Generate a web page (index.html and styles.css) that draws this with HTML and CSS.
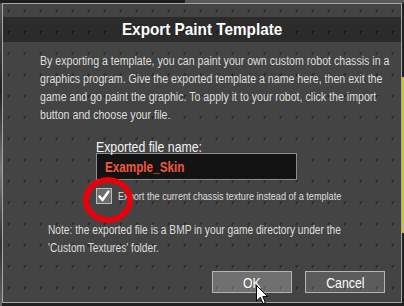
FILE: index.html
```html
<!DOCTYPE html>
<html lang="en">
<head>
  <meta charset="UTF-8">
  <meta name="viewport" content="width=device-width, initial-scale=1.0">
  <title>Export Paint Template</title>
  <link rel="stylesheet" href="styles.css">
</head>
<body>
  <div class="dialog">
    <h1 class="title"><span>Export Paint Template</span></h1>
    <p class="intro">By exporting a template, you can paint your own custom robot chassis in a<br>graphics program. Give the exported template a name here, then exit the<br>game and go paint the graphic. To apply it to your robot, click the import<br>button and choose your file.</p>

    <div class="field">
      <label><span>Exported file name:</span></label>
      <div class="input"><span>Example_Skin</span></div>
    </div>

    <div class="check">
      <span class="box">
        <svg width="14" height="14" viewBox="0 0 14 14"><path d="M2.5 7.5 L5.5 11 L11.5 2.5" fill="none" stroke="#fff" stroke-width="2.6" stroke-linecap="round" stroke-linejoin="round"/></svg>
      </span>
      <span class="check-label">Export the current chassis texture instead of a template</span>
    </div>

    <p class="note">Note: the exported file is a BMP in your game directory under the<br>'Custom Textures' folder.</p>

    <div class="actions">
      <button class="btn hover"><span>OK</span></button>
      <button class="btn"><span>Cancel</span></button>
    </div>

    <span class="marker"></span>
    <svg class="cursor" width="13" height="20" viewBox="0 0 13 20"><path d="M0.5 0.5 L0.5 16 L4.3 12.4 L7 18.6 L9.4 17.6 L6.8 11.6 L11.6 11.6 Z" fill="#fff" stroke="#000" stroke-width="1"/></svg>
  </div>
</body>
</html>
```

FILE: styles.css
```css
:root {
  --panel: #444444;
  --dot: #2b2b2b;
  --text: #dedede;
  --edge: #a8a8a8;
  --accent: #f2573d;
}

html, body {
  margin: 0;
  height: 100%;
}

body {
  background:
    linear-gradient(90deg, transparent 402px, #c9c23a 402px) 0 77px / 100% 156px no-repeat,
    linear-gradient(90deg, #1d1d1d 185px, #595959 185px) 0 0 / 100% 3px no-repeat,
    linear-gradient(#555 0, #222 30%, #777 55%, #333 80%, #666 100%) 0 0 / 2px 100% no-repeat,
    #202020;
  font-family: "Liberation Sans", Arial, sans-serif;
  color: var(--text);
  overflow: hidden;
}

.dialog {
  position: relative;
  box-sizing: border-box;
  width: 400px;
  height: 300px;
  margin: 3px 0 0 2px;
  padding-top: 13px;
  border: 1px solid var(--edge);
  background:
    radial-gradient(circle at 7px 8px, rgba(255,255,255,0.08) 0 1px, transparent 1.6px),
    radial-gradient(circle at 6px 7px, var(--dot) 0 1.3px, transparent 1.9px),
    var(--panel);
  background-size: 16px 21.3px;
}

/* the game font is a condensed face, so squeeze the text horizontally */
.title span,
.field label span,
.input span,
.check-label,
.btn span {
  display: inline-block;
  transform: scaleX(0.82);
}

.title {
  margin: 0;
  height: 25px;
  line-height: 25px;
  background: rgba(0, 0, 0, 0.36);
  text-align: center;
  font-size: 17px;
  font-weight: bold;
  color: #fff;
}

.title span {
  transform: scaleX(0.9);
}

.intro {
  margin: 10px 0 0 37px;
  font-size: 12px;
  line-height: 18px;
  white-space: nowrap;
  transform: scaleX(0.885);
  transform-origin: 0 0;
}

.field {
  margin: 16px 0 0 93px;
}

.field label {
  display: block;
  font-size: 15px;
  line-height: 13px;
  color: #f4f4f4;
}

.field label span {
  transform-origin: 0 50%;
}

.input {
  box-sizing: border-box;
  width: 201px;
  height: 27px;
  padding-left: 8px;
  border: 1px solid #8c8c8c;
  background: #131313;
  color: var(--accent);
  font-size: 15px;
  font-weight: bold;
  line-height: 25px;
}

.input span {
  transform: scaleX(0.78);
  transform-origin: 0 50%;
}

.check {
  display: flex;
  align-items: center;
  gap: 6px;
  height: 16px;
  margin: 8px 0 0 93px;
  font-size: 11px;
}

.check-label {
  transform: scaleX(0.83);
  transform-origin: 0 50%;
}

.box {
  box-sizing: border-box;
  display: flex;
  align-items: center;
  justify-content: center;
  width: 16px;
  height: 16px;
  border: 1px solid #bdbdbd;
  background: #6c6c6c;
}

.note {
  margin: 17px 0 0 45px;
  font-size: 12px;
  line-height: 18px;
  white-space: nowrap;
  transform: scaleX(0.85);
  transform-origin: 0 0;
}

.actions {
  display: flex;
  justify-content: flex-end;
  gap: 13px;
  margin-top: 14px;
  padding-right: 16px;
}

.btn {
  width: 80px;
  height: 22px;
  padding: 0;
  border: 1px solid #b3b3b3;
  background: rgba(255, 255, 255, 0.13);
  color: #fff;
  font-family: inherit;
  font-size: 15px;
}

.btn.hover {
  background: rgba(255, 255, 255, 0.24);
}

/* red highlight drawn over the checkbox */
.marker {
  position: absolute;
  left: 80px;
  top: 173px;
  width: 50px;
  height: 46px;
  box-sizing: border-box;
  border: 6px solid #e8000b;
  border-radius: 50%;
}

.cursor {
  position: absolute;
  left: 253px;
  top: 281px;
}
```
